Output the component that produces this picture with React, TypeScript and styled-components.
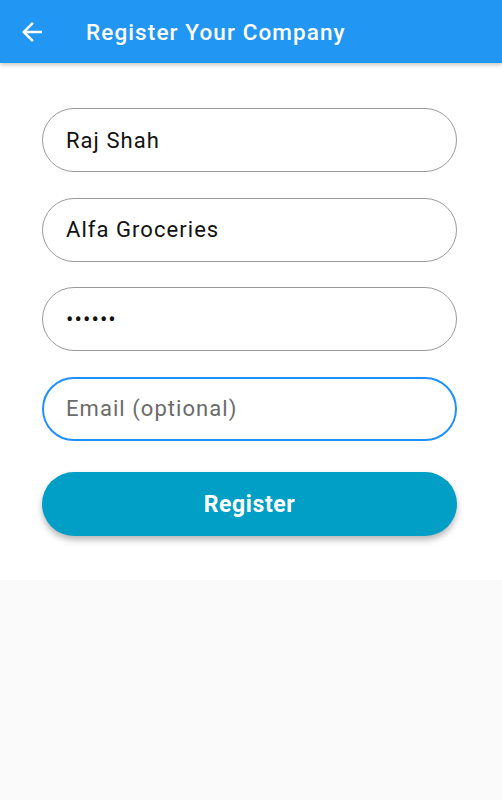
import React from "react";
import styled, { createGlobalStyle } from "styled-components";

const Global = createGlobalStyle`
  html, body { margin: 0; padding: 0; background: #fafafa; }
  body { font-family: Roboto, "Noto Sans", sans-serif; }
  * { box-sizing: border-box; }
`;

const Screen = styled.div`
  width: 502px;
  min-height: 800px;
  background: #fafafa;
  display: flex;
  flex-direction: column;
`;

const AppBar = styled.header`
  height: 63px;
  background: #2196f3;
  display: flex;
  align-items: center;
  box-shadow: 0 2px 4px rgba(0, 0, 0, 0.22);
  position: relative;
  z-index: 1;
`;

const BackButton = styled.button`
  width: 30px;
  height: 30px;
  margin-left: 17px;
  padding: 0;
  border: none;
  background: transparent;
  display: flex;
  align-items: center;
  justify-content: center;
  color: #fff;
`;

const Title = styled.h1`
  margin: 0 0 0 39px;
  font-family: Roboto, sans-serif;
  font-weight: 500;
  font-size: 22.5px;
  color: #fff;
  letter-spacing: 1.1px;
`;

const Panel = styled.main`
  background: #fff;
  padding: 45px 45px 44px 42px;
  display: flex;
  flex-direction: column;
  gap: 25.5px;
`;

const Field = styled.input<{ $focused?: boolean }>`
  height: 64px;
  width: 100%;
  border-radius: 32px;
  border: ${(p) => (p.$focused ? "2px solid #1e90ff" : "1px solid #9a9a9a")};
  padding: 0 ${(p) => (p.$focused ? "22px" : "23px")};
  font-family: Roboto, sans-serif;
  font-size: 22px;
  letter-spacing: 1.05px;
  color: #111;
  background: #fff;
  outline: none;
  &::placeholder {
    color: #6b6b6b;
  }
`;

const SubmitButton = styled.button`
  margin-top: 6px;
  height: 64px;
  width: 100%;
  border: none;
  border-radius: 32px;
  background: #019fc6;
  color: #fff;
  font-family: Roboto, sans-serif;
  font-weight: 700;
  font-size: 23px;
  letter-spacing: 0.6px;
  box-shadow: 0 4px 6px rgba(0, 0, 0, 0.28);
`;

export default function App() {
  return (
    <Screen>
      <Global />
      <AppBar>
        <BackButton aria-label="Back">
          <svg width="30" height="30" viewBox="0 0 24 24" fill="#fff">
            <path d="M20 11H7.83l5.59-5.59L12 4l-8 8 8 8 1.41-1.41L7.83 13H20v-2z" />
          </svg>
        </BackButton>
        <Title>Register Your Company</Title>
      </AppBar>
      <Panel>
        <Field defaultValue="Raj Shah" />
        <Field defaultValue="Alfa Groceries" />
        <Field type="password" defaultValue="123456" />
        <Field $focused placeholder="Email (optional)" />
        <SubmitButton>Register</SubmitButton>
      </Panel>
    </Screen>
  );
}
